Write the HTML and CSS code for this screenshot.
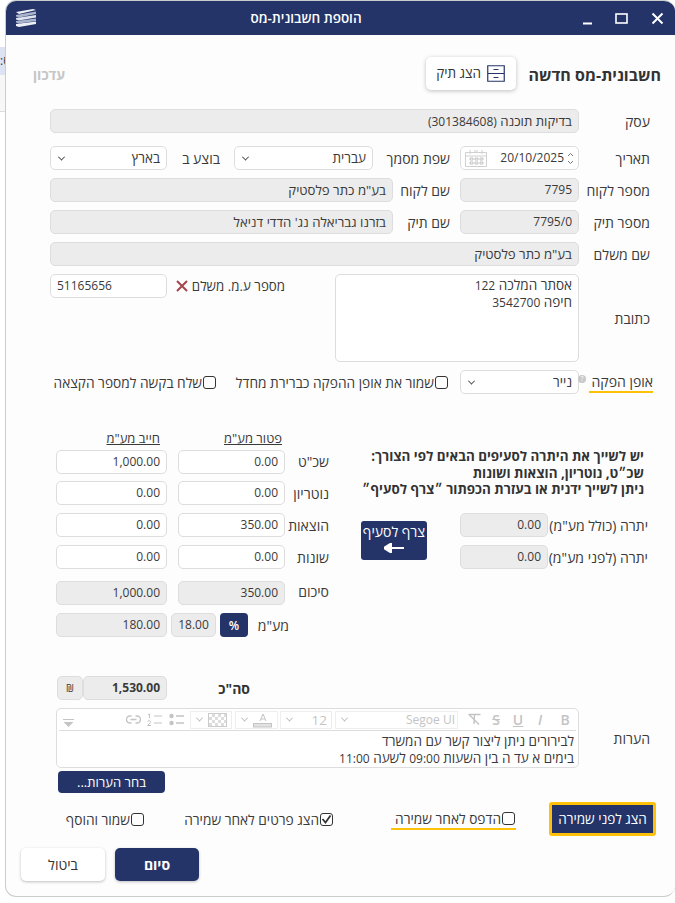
FILE: index.html
```html
<!DOCTYPE html>
<html lang="he" dir="rtl">
<head>
    <meta charset="UTF-8">
    <meta name="viewport" content="width=device-width, initial-scale=1.0">
    <title>הוספת חשבונית-מס</title>
    <link rel="stylesheet" href="styles.css">
</head>
<body>
    <div class="window">
        <div class="titlebar">
            <div class="window-controls">
                <span class="control">
                    <svg width="13" height="13" viewBox="0 0 13 13"><path d="M1.5 1.5 11.5 11.5M11.5 1.5 1.5 11.5" stroke="#fff" stroke-width="2"/></svg>
                </span>
                <span class="control">
                    <svg width="13" height="11" viewBox="0 0 13 11"><rect x="1" y="1" width="11" height="9" fill="none" stroke="#fff" stroke-width="1.6"/></svg>
                </span>
                <span class="control">
                    <svg width="9" height="13" viewBox="0 0 9 13"><path d="M0 11.5H9" stroke="#fff" stroke-width="2"/></svg>
                </span>
            </div>
            <div class="window-title">הוספת חשבונית-מס</div>
            <svg class="logo" width="22" height="20" viewBox="0 0 22 20">
                <path d="M1 4 18 1 21 2 4 6Z" fill="#eef0f6"/>
                <path d="M1 7 21 3.500V6L4 9.500 1 8.500Z" fill="#aab3cc"/>
                <path d="M1 10 21 7V9.500L4 12.500 1 11.500Z" fill="#dfe3ee"/>
                <path d="M1 13 21 10.500V13L4 15.500 1 14.500Z" fill="#aab3cc"/>
                <path d="M1 16 21 13.500V16L4 19 1 18Z" fill="#eef0f6"/>
            </svg>
        </div>

        <div class="heading-row">
            <h1>חשבונית-מס חדשה</h1>
            <button type="button" class="file-btn">
                <svg width="18" height="17" viewBox="0 0 18 17"><path d="M.75.75H17.250V16.250H.75ZM.75 8.500H17.250M6.500 4.500H11.500M6.500 12.500H11.500" fill="none" stroke="#243469" stroke-width="1.200"/></svg>
                הצג תיק
            </button>
            <span class="update-link">עדכון</span>
        </div>

        <div class="form-row row-wide row-first">
            <label class="lbl">עסק</label>
            <div class="field readonly">בדיקות תוכנה <span class="digits">(301384608)</span></div>
        </div>

        <div class="form-row row-date">
            <label class="lbl">תאריך</label>
            <div class="field date-field">
                <span class="spin">
                    <svg width="7" height="13" viewBox="0 0 7 13"><path d="M1 4 3.500 1.500 6 4M1 9 3.500 11.500 6 9" fill="none" stroke="#777" stroke-width="1"/></svg>
                </span>
                <span class="date-value">20/10/2025</span>
                <svg class="calendar" width="22" height="18" viewBox="0 0 22 18">
                    <path d="M.5 3.500H21.500V17.500H.5ZM.5 7H21.500M5 1V5M17 1V5M9 2H13" fill="none" stroke="#d0d0d0"/>
                    <path d="M5 9H8V11H5ZM10 9H13V11H10ZM15 9H18V11H15ZM5 13H8V15H5ZM10 13H13V15H10ZM15 13H18V15H15Z" fill="none" stroke="#b5b5b5" stroke-width=".8"/>
                </svg>
            </div>
            <label class="lbl lbl-lang">שפת מסמך</label>
            <div class="field select-field"><span>עברית</span><span class="chevron"></span></div>
            <label class="lbl lbl-place">בוצע ב</label>
            <div class="field select-field"><span>בארץ</span><span class="chevron"></span></div>
        </div>

        <div class="form-row row-pair">
            <label class="lbl">מספר לקוח</label>
            <div class="field readonly num">7795</div>
            <label class="lbl lbl-inner">שם לקוח</label>
            <div class="field readonly">בע"מ כתר פלסטיק</div>
        </div>

        <div class="form-row row-pair">
            <label class="lbl">מספר תיק</label>
            <div class="field readonly num">7795/0</div>
            <label class="lbl lbl-inner">שם תיק</label>
            <div class="field readonly">בזרנו גבריאלה נג' הדדי דניאל</div>
        </div>

        <div class="form-row row-wide">
            <label class="lbl">שם משלם</label>
            <div class="field readonly">בע"מ כתר פלסטיק</div>
        </div>

        <div class="address-row">
            <label class="lbl address-lbl">כתובת</label>
            <div class="field address-box">אסתר המלכה <span class="digits">122</span><br>חיפה <span class="digits">3542700</span></div>
            <div class="vat-id">
                <label class="lbl">מספר ע.מ. משלם</label>
                <svg class="error-x" width="12" height="12" viewBox="0 0 12 12"><path d="M1 1 11 11M11 1 1 11" stroke="#a8444c" stroke-width="2"/></svg>
            </div>
            <div class="field field-ltr vat-input">51165656</div>
        </div>

        <div class="delivery-row">
            <label class="lbl"><span class="gold-line delivery-lbl">אופן הפקה</span></label>
            <div class="field select-field delivery-select">
                <span class="help-dot">?</span>
                <span>נייר</span><span class="chevron"></span>
            </div>
            <label class="check save-default"><span class="box"></span>שמור את אופן ההפקה כברירת מחדל</label>
            <label class="check"><span class="box"></span>שלח בקשה למספר הקצאה</label>
        </div>

        <div class="tax-section">
            <div class="balance">
                <p class="balance-note">יש לשייך את היתרה לסעיפים הבאים לפי הצורך:<br>שכ״ט, נוטריון, הוצאות ושונות<br>ניתן לשייך ידנית או בעזרת הכפתור ״צרף לסעיף״</p>
                <div class="balance-body">
                    <div class="balance-rows">
                        <div class="balance-row"><label class="lbl">יתרה (כולל מע"מ)</label><div class="field readonly num">0.00</div></div>
                        <div class="balance-row"><label class="lbl">יתרה (לפני מע"מ)</label><div class="field readonly num">0.00</div></div>
                    </div>
                    <button type="button" class="attach-btn">
                        צרף לסעיף
                        <svg width="20" height="10" viewBox="0 0 20 10"><path d="M20 5H6M7 .5 0 5 7 9.500Z" fill="#fff" stroke="#fff" stroke-width="2"/></svg>
                    </button>
                </div>
            </div>

            <div class="split">
                <span></span><span class="col-head head-exempt">פטור מע"מ</span><span class="col-head">חייב מע"מ</span>

                <label class="lbl">שכ"ט</label>
                <div class="field num">0.00</div>
                <div class="field num">1,000.00</div>

                <label class="lbl">נוטריון</label>
                <div class="field num">0.00</div>
                <div class="field num">0.00</div>

                <label class="lbl">הוצאות</label>
                <div class="field num">350.00</div>
                <div class="field num">0.00</div>

                <label class="lbl">שונות</label>
                <div class="field num">0.00</div>
                <div class="field num">0.00</div>

                <label class="lbl sum-row">סיכום</label>
                <div class="field readonly num sum-row">350.00</div>
                <div class="field readonly num sum-row">1,000.00</div>

                <div class="vat-row sum-row">
                    <label class="lbl">מע"מ</label>
                    <button type="button" class="percent-btn">%</button>
                    <div class="field readonly num vat-rate">18.00</div>
                </div>
                <div class="field readonly num sum-row">180.00</div>
            </div>
        </div>

        <div class="total-row">
            <strong class="total-lbl">סה"כ</strong>
            <div class="field readonly num total-value">1,530.00</div>
            <div class="field readonly currency">₪</div>
        </div>

        <div class="notes-row">
            <label class="lbl">הערות</label>
            <div class="notes-col">
                <div class="editor">
                    <div class="toolbar">
                        <b class="tool">B</b>
                        <i class="tool tool-gap">I</i>
                        <u class="tool">U</u>
                        <s class="tool">S</s>
                        <span class="tool">
                            <svg width="15" height="13" viewBox="0 0 15 13"><path d="M1.500 1.500H13.500M7.500 1.500 7 11M2.500 2 12 11.500" fill="none" stroke="#c4c4c4" stroke-width="1.400"/></svg>
                        </span>
                        <span class="combo combo-font"><span>Segoe UI</span><span class="chevron light"></span></span>
                        <span class="combo combo-size"><span>12</span><span class="chevron light"></span></span>
                        <span class="combo combo-color">
                            <svg width="20" height="16" viewBox="0 0 20 16"><path d="M7 9 10 2 13 9M8 7H12" fill="none" stroke="#c4c4c4"/><rect x=".5" y="11.500" width="18" height="3.500" fill="#e2e2e2" stroke="#c4c4c4"/></svg>
                            <span class="chevron light"></span>
                        </span>
                        <span class="combo combo-fill">
                            <span class="checker"></span>
                            <span class="chevron light"></span>
                        </span>
                        <span class="tool tool-bullets">
                            <svg width="16" height="14" viewBox="0 0 16 14"><circle cx="2.500" cy="3" r="2.200" fill="#c4c4c4"/><circle cx="2.500" cy="10" r="2.200" fill="#c4c4c4"/><path d="M7 3H15M7 10H15" stroke="#c4c4c4" stroke-width="1.500"/></svg>
                        </span>
                        <span class="tool">
                            <svg width="16" height="14" viewBox="0 0 16 14"><path d="M1 1.500 2.500 1V5M.5 8.500C1 7 4 7.500 3.500 9.500L.5 12.500H4M7 3H15M7 10H15" fill="none" stroke="#c4c4c4"/></svg>
                        </span>
                        <span class="tool">
                            <svg width="15" height="9" viewBox="0 0 15 9"><path d="M5.500 1H4A3.500 3.500 0 0 0 4 8H5.500M9.500 1H11A3.500 3.500 0 0 1 11 8H9.500M4.500 4.500H10.500" fill="none" stroke="#c4c4c4" stroke-width="1.300"/></svg>
                        </span>
                        <svg class="toolbar-more" width="11" height="8" viewBox="0 0 11 8"><path d="M0 .5H11" stroke="#c4c4c4"/><path d="M.5 3H10.500L5.500 8Z" fill="#c4c4c4"/></svg>
                    </div>
                    <div class="editor-text">לבירורים ניתן ליצור קשר עם המשרד<br>בימים א עד ה בין השעות <span class="digits">09:00</span> לשעה <span class="digits">11:00</span></div>
                </div>
                <button type="button" class="notes-btn">בחר הערות...</button>
            </div>
        </div>

        <div class="options-row">
            <button type="button" class="preview-btn">הצג לפני שמירה</button>
            <label class="check print-check"><span class="gold-line print-line"><span class="box"></span>הדפס לאחר שמירה</span></label>
            <label class="check details-check">
                <span class="box">
                    <svg width="11" height="10" viewBox="0 0 11 10"><path d="M1.500 5 4.500 8.500 9.500 1.500" fill="none" stroke="#333" stroke-width="1.800"/></svg>
                </span>הצג פרטים לאחר שמירה
            </label>
            <label class="check add-check"><span class="box"></span>שמור והוסף</label>
        </div>

        <div class="footer-row">
            <button type="button" class="btn-finish">סיום</button>
            <button type="button" class="btn-cancel">ביטול</button>
        </div>
    </div>
    <div class="backdrop">
        <div class="backdrop-tab">:ס</div>
        <div class="backdrop-line"></div>
    </div>
</body>
</html>
```

FILE: styles.css
```css
* {
    margin: 0;
    padding: 0;
    box-sizing: border-box;
}

body {
    font-family: "Open Sans", "Liberation Sans", Arial, sans-serif;
    font-size: 13.5px;
    color: #3a3a3a;
    background: #fff;
    width: 675px;
    height: 903px;
    overflow: hidden;
    display: flex;
}

/* strip of the page behind the dialog */
.backdrop {
    width: 5px;
    flex: none;
    padding-top: 47px;
}

.backdrop-tab {
    height: 28px;
    background: #dde3f3;
    font-size: 12px;
    line-height: 28px;
    overflow: hidden;
    direction: ltr;
}

.backdrop-line {
    height: 37px;
    background: #f7f7f7;
    border-bottom: 1px solid #ddd;
}

.window {
    width: 670px;
    height: 897px;
    background: #fdfdfd;
    border-top: 1px solid #ccc;
    border-left: 1px solid #ccc;
    border-bottom: 1px solid #ccc;
    border-radius: 11px;
    overflow: hidden;
    flex: none;
}

.titlebar {
    height: 34px;
    background: #243469;
    display: flex;
    align-items: center;
    color: #fff;
}

.window-controls {
    display: flex;
    align-items: center;
    width: 100px;
    padding-right: 11px;
    gap: 23px;
    flex: none;
}

.control {
    display: flex;
}

.window-title {
    flex: 1;
    text-align: center;
    font-weight: 600;
    font-size: 13.5px;
}

.logo {
    margin-left: 9px;
    flex: none;
}

.heading-row {
    display: flex;
    align-items: center;
    height: 34px;
    margin-top: 21px;
    padding-right: 14px;
    padding-left: 27px;
}

h1 {
    font-size: 16px;
    font-weight: 700;
    color: #333;
    margin: 3px 0 0 13px;
}

.file-btn {
    width: 90px;
    height: 33px;
    border: none;
    background: #fff;
    border-radius: 5px;
    box-shadow: 0 1px 4px rgba(0, 0, 0, 0.25);
    font: inherit;
    color: #333;
    display: flex;
    align-items: center;
    justify-content: center;
    gap: 6px;
}

.update-link {
    margin: 3px auto 0 0;
    color: #c6c6c6;
    font-weight: 700;
    font-size: 14px;
}

.form-row {
    display: grid;
    margin-top: 8px;
    margin-right: 25px;
    height: 24px;
}

.row-first {
    margin-top: 19px;
}

.row-wide {
    grid-template-columns: 71px 529px;
}

.row-date {
    grid-template-columns: 71px 119px 87px 139px 67px 117px;
    margin-top: 13px;
}

.row-pair {
    grid-template-columns: 71px 119px 67px 343px;
}

.lbl {
    display: block;
    align-self: center;
    font-size: 14px;
    white-space: nowrap;
}

.lbl-inner,
.lbl-lang {
    padding-right: 10px;
}

.lbl-place {
    padding-right: 14px;
}

.field {
    height: 24px;
    line-height: 22px;
    padding: 0 6px;
    background: #fff;
    border: 1px solid #ddd;
    border-radius: 5px;
    white-space: nowrap;
    overflow: hidden;
}

.readonly {
    background: #ececec;
    font-size: 13.200px;
}

.num,
.field-ltr {
    direction: ltr;
    font-size: 12px;
}

.num {
    text-align: right;
}

.digits {
    font-size: 12px;
}

.date-field {
    display: flex;
    align-items: center;
    padding: 0 4px;
}

.spin {
    display: flex;
    margin-left: 3px;
}

.date-value {
    direction: ltr;
    font-size: 12px;
}

.calendar {
    margin-right: auto;
    flex: none;
}

.select-field {
    display: flex;
    justify-content: space-between;
    align-items: center;
}

.chevron {
    width: 5px;
    height: 5px;
    border-left: 1px solid #444;
    border-bottom: 1px solid #444;
    transform: rotate(-45deg) translate(1px, -1px);
    margin-left: 2px;
    flex: none;
}

.chevron.light {
    border-color: #bbb;
}

.address-row {
    display: flex;
    margin-top: 8px;
    margin-right: 25px;
    height: 88px;
}

.address-lbl {
    width: 71px;
    flex: none;
}

.address-box {
    width: 244px;
    height: 88px;
    line-height: 17px;
    padding-top: 2px;
    flex: none;
}

.vat-id {
    width: 168px;
    height: 24px;
    flex: none;
    display: flex;
    align-items: center;
    padding-right: 50px;
    gap: 4px;
}

.vat-id .lbl {
    font-size: 13.300px;
}

.error-x {
    flex: none;
}

.vat-input {
    width: 117px;
    flex: none;
}

.delivery-row {
    display: flex;
    align-items: center;
    height: 24px;
    margin-top: 8px;
    margin-right: 25px;
}

.delivery-row > .lbl {
    width: 71px;
    flex: none;
}

.gold-line {
    display: inline-block;
    border-bottom: 2px solid #ffc107;
}

.delivery-lbl {
    padding-left: 3px;
    margin-right: -3px;
}

.delivery-select {
    width: 119px;
    flex: none;
    overflow: visible;
    position: relative;
}

.help-dot {
    position: absolute;
    right: -8px;
    top: 4px;
    width: 8px;
    height: 8px;
    border-radius: 50%;
    background: #c8c8c8;
    color: #fff;
    font-size: 7px;
    line-height: 8px;
    text-align: center;
}

.check {
    display: flex;
    align-items: center;
    gap: 1px;
    font-size: 13.700px;
    white-space: nowrap;
}

.box {
    width: 13px;
    height: 13px;
    background: #fff;
    border: 1px solid #333;
    border-radius: 3px;
    display: inline-flex;
    align-items: center;
    justify-content: center;
    flex: none;
}

.save-default {
    margin-right: 12px;
    width: 232px;
    flex: none;
}

.tax-section {
    display: flex;
    margin-top: 24px;
    margin-right: 27px;
}

.balance {
    width: 315px;
    flex: none;
}

.balance-note {
    font-weight: 700;
    font-size: 13.400px;
    line-height: 16.500px;
    margin: 30px 4px 0 0;
    color: #333;
}

.balance-body {
    display: flex;
    margin-top: 15.500px;
}

.balance-rows {
    width: 188px;
    flex: none;
}

.balance-row {
    display: flex;
    align-items: center;
    justify-content: space-between;
    margin-bottom: 8px;
}

.balance-row .field {
    width: 88px;
    flex: none;
}

.attach-btn {
    width: 66px;
    height: 39px;
    margin-top: 8px;
    margin-right: 33px;
    padding-bottom: 4px;
    background: #243469;
    color: #fff;
    border: none;
    border-radius: 3px;
    font: inherit;
    font-size: 14px;
    line-height: 16px;
    white-space: nowrap;
}

.attach-btn svg {
    display: block;
    margin: 3px auto 0;
}

.split {
    display: grid;
    grid-template-columns: 33px 107px 111px;
    grid-template-rows: 24px 23px repeat(5, 24px);
    column-gap: 11px;
    row-gap: 8px;
    width: 273px;
    margin-right: 4px;
}

.col-head {
    text-align: right;
    text-decoration: underline;
    align-self: end;
    font-size: 13px;
    padding-right: 7px;
    margin-bottom: -5px;
}

.head-exempt {
    padding-right: 3px;
}

.sum-row {
    margin-top: 4px;
}

.vat-row {
    grid-column: span 2;
    display: flex;
    align-items: center;
    height: 24px;
    padding-right: 40px;
    margin-left: -7px;
}

.vat-row .lbl {
    width: 41px;
    flex: none;
}

.percent-btn {
    width: 28px;
    height: 24px;
    background: #243469;
    color: #fff;
    border: none;
    border-radius: 4px;
    font: inherit;
    font-size: 12px;
    font-weight: 600;
    flex: none;
}

.vat-rate {
    width: 45px;
    margin-right: 4px;
    padding: 0;
    text-align: center;
    flex: none;
}

.total-row {
    display: flex;
    align-items: center;
    margin-top: 43px;
    margin-right: 425px;
}

.total-lbl {
    width: 83px;
    flex: none;
    font-size: 14px;
    color: #333;
}

.total-value {
    width: 84px;
    font-weight: 700;
    flex: none;
}

.currency {
    width: 26px;
    padding: 0;
    text-align: center;
    font-size: 10px;
    flex: none;
}

.notes-row {
    display: flex;
    margin-top: 8px;
    margin-right: 25px;
}

.notes-row > .lbl {
    width: 71px;
    flex: none;
    align-self: flex-start;
    padding-top: 21px;
}

.notes-col {
    width: 523px;
    flex: none;
}

.editor {
    height: 60px;
    background: #fff;
    border: 1px solid #ddd;
    border-radius: 5px;
}

.toolbar {
    height: 22px;
    display: flex;
    align-items: center;
    margin: 0 2px;
    border-bottom: 1px solid #ddd;
    color: #c4c4c4;
}

.tool {
    width: 22px;
    display: flex;
    justify-content: center;
    align-items: center;
    font-size: 14px;
    font-weight: 600;
    flex: none;
}

.tool-gap {
    margin-right: 3px;
}

.tool-bullets {
    margin-right: 2px;
}

.toolbar-more {
    margin-right: auto;
    margin-left: 4px;
    margin-top: 6px;
    flex: none;
}

.combo {
    height: 18px;
    border: 1px solid #eee;
    display: flex;
    align-items: center;
    justify-content: space-between;
    padding: 0 4px;
    flex: none;
}

.combo-font {
    width: 123px;
    margin-right: 5px;
    padding-right: 2px;
    direction: ltr;
    flex-direction: row-reverse;
    font-size: 12px;
}

.combo-size {
    width: 52px;
    margin-right: 3px;
    direction: ltr;
    flex-direction: row-reverse;
}

.combo-color {
    width: 43px;
    margin-right: 2px;
}

.combo-fill {
    width: 42px;
    margin-right: 3px;
}

.checker {
    width: 19px;
    height: 14px;
    background: repeating-conic-gradient(#ddd 0 25%, #fff 0 50%) 0 0 / 6px 6px;
    border: 1px solid #ccc;
}

.editor-text {
    padding: 2px 4px 0;
    line-height: 17px;
    height: 36px;
    overflow: hidden;
}

.notes-btn {
    display: block;
    width: 107px;
    height: 22px;
    margin: 3px 414px 0 0;
    background: #243469;
    color: #fff;
    border: none;
    border-radius: 4px;
    font: inherit;
    font-size: 13px;
}

.options-row {
    display: flex;
    align-items: center;
    height: 34px;
    margin-top: 9px;
    margin-right: 19px;
}

.preview-btn {
    width: 107px;
    height: 34px;
    background: #243469;
    color: #fff;
    border: 3px solid #ffc107;
    border-radius: 3px;
    font: inherit;
    flex: none;
}

.print-check {
    margin-right: 33px;
    width: 183px;
    flex: none;
}

.print-line {
    display: flex;
    align-items: center;
    gap: 1px;
    padding-left: 4px;
}

.print-line .box {
    margin-right: 1px;
}

.details-check {
    width: 189px;
    flex: none;
}

.footer-row {
    display: flex;
    gap: 10px;
    margin-top: 12px;
    margin-right: 476px;
}

.footer-row button {
    width: 84px;
    height: 33px;
    border: none;
    border-radius: 5px;
    font: inherit;
    font-size: 14px;
    box-shadow: 0 1px 3px rgba(0, 0, 0, 0.25);
}

.footer-row .btn-finish {
    background: #243469;
    color: #fff;
    font-weight: 700;
}

.btn-cancel {
    background: #fff;
    color: #333;
}
```
